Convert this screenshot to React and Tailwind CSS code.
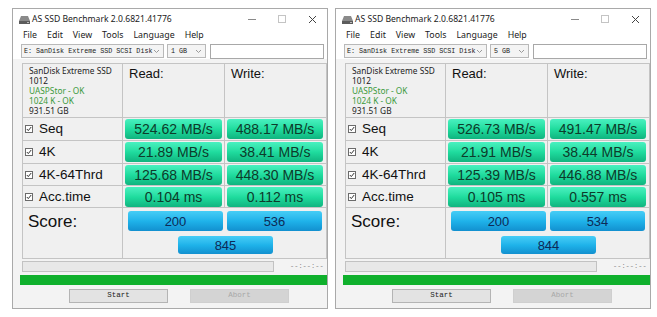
import React from "react";

const ui = { fontFamily: '"Noto Sans", "Open Sans", sans-serif' };
const arial = { fontFamily: '"Liberation Sans", Arial, sans-serif' };
const mono = { fontFamily: '"Liberation Mono", "DejaVu Sans Mono", monospace' };

const runs = [
  {
    size: "1 GB",
    rows: [
      ["Seq", "524.62 MB/s", "488.17 MB/s"],
      ["4K", "21.89 MB/s", "38.41 MB/s"],
      ["4K-64Thrd", "125.68 MB/s", "448.30 MB/s"],
      ["Acc.time", "0.104 ms", "0.112 ms"],
    ],
    score: ["200", "536", "845"],
  },
  {
    size: "5 GB",
    rows: [
      ["Seq", "526.73 MB/s", "491.47 MB/s"],
      ["4K", "21.91 MB/s", "38.44 MB/s"],
      ["4K-64Thrd", "125.39 MB/s", "446.88 MB/s"],
      ["Acc.time", "0.105 ms", "0.557 ms"],
    ],
    score: ["200", "534", "844"],
  },
];

const rowHeights = ["h-[23px]", "h-[23px]", "h-[22px]", "h-[22px]"];

const DriveIcon = () => (
  <svg width="11" height="9" viewBox="0 0 11 9">
    <path d="M2 1h7l2 5H0z" fill="#8a8a8a" />
    <rect x="0" y="6" width="11" height="3" fill="#5c5c5c" />
    <rect x="8" y="7" width="2" height="1" fill="#bdbdbd" />
  </svg>
);

const Chevron = () => (
  <svg width="7" height="5" viewBox="0 0 7 5">
    <path d="M1 1l2.5 2.5L6 1" fill="none" stroke="#9a9a9a" strokeWidth="1" />
  </svg>
);

const Check = () => (
  <span className="w-[8px] h-[8px] border border-[#6b6b6b] bg-white flex items-center justify-center shrink-0">
    <svg width="6" height="6" viewBox="0 0 6 6">
      <path d="M0.8 3l1.5 1.6L5.2 1" fill="none" stroke="#333" strokeWidth="1" />
    </svg>
  </span>
);

const GreenBar = ({ children }) => (
  <div
    className="flex-1 h-[20px] rounded-[3px] bg-gradient-to-b from-[#48f1c0] via-[#1fdc9e] to-[#10b47f] flex items-center justify-center text-[14px] text-[#0d3b2b] leading-none"
    style={arial}
  >
    {children}
  </div>
);

const BlueBar = ({ children, className }) => (
  <div
    className={
      "w-[95px] rounded-[3px] bg-gradient-to-b from-[#45cdf6] via-[#1fb3ea] to-[#1290cf] flex items-center justify-center text-[13px] text-[#0d2a57] leading-none " +
      className
    }
    style={arial}
  >
    {children}
  </div>
);

const Window = ({ run }) => (
  <div className="w-[316px] h-[301px] border border-[#a9a9a9] bg-[#f3f3f3] flex flex-col">
    {/* titulo */}
    <div className="h-[20px] bg-white flex items-center pl-[6px]" style={ui}>
      <DriveIcon />
      <span className="ml-[2px] text-[8.6px] text-[#1a1a1a] whitespace-nowrap">AS SSD Benchmark 2.0.6821.41776</span>
      <div className="ml-auto flex items-center h-full">
        <span className="w-[30px] flex justify-center">
          <span className="w-[8px] h-px bg-[#8a8a8a]" />
        </span>
        <span className="w-[30px] flex justify-center">
          <span className="w-[8px] h-[8px] border border-[#c4c4c4]" />
        </span>
        <span className="w-[30px] flex justify-center">
          <svg width="9" height="9" viewBox="0 0 9 9">
            <path d="M1 1l7 7M8 1L1 8" stroke="#444" strokeWidth="1" />
          </svg>
        </span>
      </div>
    </div>

    {/* menu */}
    <div className="h-[14px] bg-white flex items-center pl-[10px] gap-[10px] text-[8.8px] text-[#1a1a1a]" style={ui}>
      <span>File</span>
      <span>Edit</span>
      <span>View</span>
      <span>Tools</span>
      <span>Language</span>
      <span>Help</span>
    </div>

    {/* barra de selecao */}
    <div className="h-[16px] bg-white flex items-center pl-[8px] pr-[3px] gap-[3px]">
      <div className="w-[143px] h-[14px] border border-[#b9b9b9] bg-[#f4f4f4] flex items-center pl-[2px] pr-[3px]">
        <span className="text-[6.7px] text-[#222] whitespace-nowrap" style={mono}>
          E: SanDisk Extreme SSD SCSI Disk
        </span>
        <span className="ml-auto">
          <Chevron />
        </span>
      </div>
      <div className="w-[39px] h-[14px] border border-[#b9b9b9] bg-[#f4f4f4] flex items-center pl-[3px] pr-[3px]">
        <span className="text-[6.7px] text-[#222] whitespace-nowrap" style={mono}>
          {run.size}
        </span>
        <span className="ml-auto">
          <Chevron />
        </span>
      </div>
      <div className="flex-1 h-[15px] ml-[1px] border border-[#a8a8a8] bg-white" />
    </div>

    {/* tabela de resultados */}
    <div className="mt-[4px] ml-[9px] w-[305px] border border-[#c4c4c4] bg-[#f0f0f0]">
      <div className="flex h-[54px] border-b border-[#c4c4c4]">
        <div className="w-[100px] border-r border-[#c4c4c4] pl-[6px] pt-[2px] text-[8.3px] leading-[10px]" style={ui}>
          <div className="text-[#222] whitespace-nowrap">SanDisk Extreme SSD</div>
          <div className="text-[#222]">1012</div>
          <div className="text-[#3c9a3c] whitespace-nowrap">UASPStor - OK</div>
          <div className="text-[#3c9a3c] whitespace-nowrap">1024 K - OK</div>
          <div className="text-[#222]">931.51 GB</div>
        </div>
        <div className="w-[102px] border-r border-[#c4c4c4] pl-[6px] pt-[3px] text-[13px] leading-none text-[#111]" style={arial}>
          Read:
        </div>
        <div className="flex-1 pl-[6px] pt-[3px] text-[13px] leading-none text-[#111]" style={arial}>
          Write:
        </div>
      </div>

      {run.rows.map(([label, read, write], i) => (
        <div key={label} className={"flex border-b border-[#c4c4c4] " + rowHeights[i]}>
          <div className="w-[100px] border-r border-[#c4c4c4] flex items-center pl-[2px] gap-[6px]">
            <Check />
            <span className="text-[13.5px] text-[#111] leading-none" style={arial}>
              {label}
            </span>
          </div>
          <div className="w-[102px] border-r border-[#c4c4c4] flex items-center px-[2px]">
            <GreenBar>{read}</GreenBar>
          </div>
          <div className="flex-1 flex items-center pl-[2px] pr-[3px]">
            <GreenBar>{write}</GreenBar>
          </div>
        </div>
      ))}

      <div className="flex h-[50px]">
        <div className="w-[100px] border-r border-[#c4c4c4] pl-[5px] pt-[1px] text-[17px] text-[#111]" style={arial}>
          Score:
        </div>
        <div className="flex-1 flex flex-col pt-[3px]">
          <div className="flex pl-[5px] gap-[4px]">
            <BlueBar className="h-[20px]">{run.score[0]}</BlueBar>
            <BlueBar className="h-[20px]">{run.score[1]}</BlueBar>
          </div>
          <div className="flex justify-center mt-[5px] pl-[2px]">
            <BlueBar className="h-[18px]">{run.score[2]}</BlueBar>
          </div>
        </div>
      </div>
    </div>

    {/* progresso */}
    <div className="mt-[2px] ml-[9px] flex items-center">
      <div className="w-[252px] h-[11px] border border-[#c2c2c2] bg-[#e8e8e8]" />
      <span className="ml-[16px] text-[7px] text-[#888] whitespace-nowrap" style={mono}>
        --:--:--
      </span>
    </div>
    <div className="mt-[3px] ml-[7px] w-[307px] h-[10px] bg-[#0fb02c]" />

    {/* botoes */}
    <div className="mt-[4px] flex pl-[56px] gap-[22px]">
      <div className="w-[99px] h-[14px] border border-[#b4b4b4] bg-[#e3e3e3] flex items-center justify-center text-[7.5px] text-[#222]" style={mono}>
        Start
      </div>
      <div className="w-[99px] h-[14px] border border-[#cfcfcf] bg-[#d4d4d4] flex items-center justify-center text-[7.5px] text-[#a8a8a8]" style={mono}>
        Abort
      </div>
    </div>
  </div>
);

export default function App() {
  return (
    <div className="w-[657px] h-[317px] bg-white flex pl-[12px] pt-[8px] gap-[7px]">
      {runs.map((run, i) => (
        <Window key={i} run={run} />
      ))}
    </div>
  );
}
